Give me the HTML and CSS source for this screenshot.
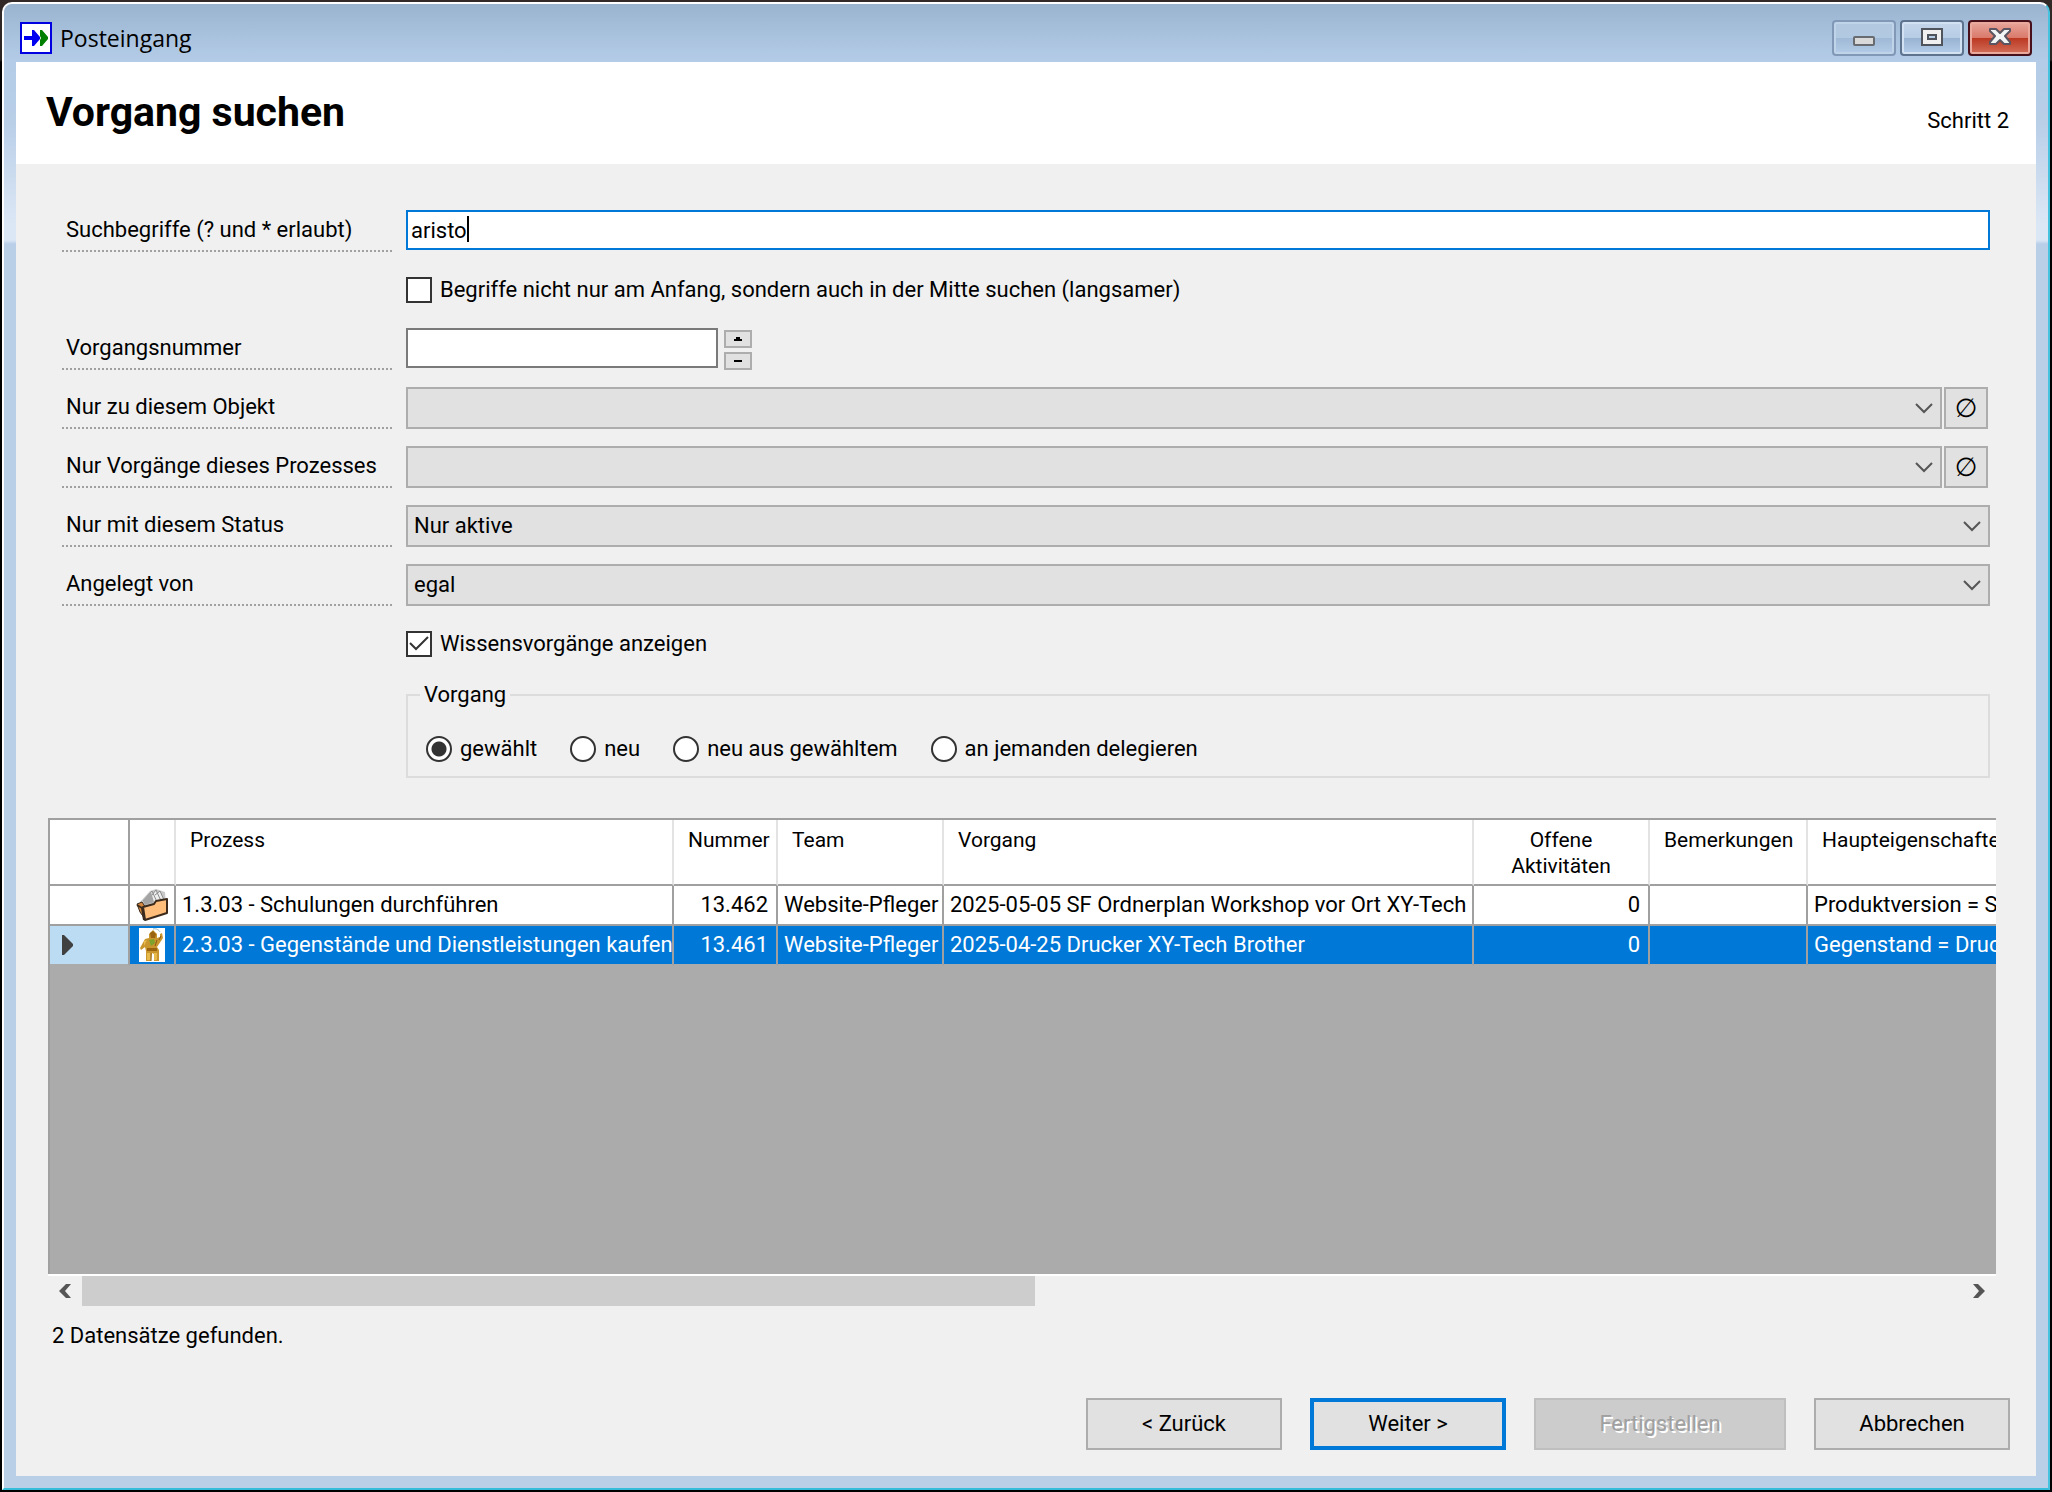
FILE: index.html
```html
<!DOCTYPE html>
<html lang="de">
<head>
<meta charset="utf-8">
<title>Posteingang</title>
<link rel="stylesheet" href="styles.css">
</head>
<body>
<div class="window">
  <header class="titlebar">
    <svg class="app-icon" viewBox="0 0 32 32" aria-hidden="true">
      <rect x="1" y="1" width="30" height="30" fill="#fff" stroke="#0000e0" stroke-width="2"/>
      <path d="M4 14h8V8h2l6 7v2l-6 7h-2v-6H4z" fill="#0000f0"/>
      <path d="M20 8h2l6 7v2l-6 7h-2v-6l1-2-1-2z" fill="#008000"/>
    </svg>
    <span class="caption">Posteingang</span>
    <button class="win-btn win-min" type="button" aria-label="Minimieren">
      <svg width="22" height="24" viewBox="0 0 22 24"><rect x="1" y="13" width="20" height="8" rx="1" fill="#d9d9d9" stroke="#686b70" stroke-width="2"/></svg>
    </button>
    <button class="win-btn" type="button" aria-label="Maximieren">
      <svg width="22" height="24" viewBox="0 0 22 24"><path fill-rule="evenodd" d="M1 5h20v16H1zM7 11v4h8v-4z" fill="#f0f0f0" stroke="#50555d" stroke-width="2"/></svg>
    </button>
    <button class="win-btn win-close" type="button" aria-label="Schließen">
      <svg width="22" height="24" viewBox="0 0 22 24"><path d="M1 5h6l4 4 4-4h6v2l-5 5 5 6v2h-6l-4-4-4 4H1v-2l5-6-5-5z" fill="#f2f4f6" stroke="#5a5560" stroke-width="2" stroke-linejoin="round"/></svg>
    </button>
  </header>

  <div class="client">
    <div class="page-head">
      <h1>Vorgang suchen</h1>
      <span class="step">Schritt 2</span>
    </div>

    <form class="search">
      <label class="field-label" for="terms">Suchbegriffe (? und * erlaubt)</label>
      <div class="control term-box">
        <input class="textbox active" id="terms" type="text" value="aristo">
        <span class="caret"></span>
      </div>

      <label class="check"><input type="checkbox"><span>Begriffe nicht nur am Anfang, sondern auch in der Mitte suchen (langsamer)</span></label>

      <label class="field-label" for="number">Vorgangsnummer</label>
      <div class="control number-box">
        <input class="textbox" id="number" type="text">
        <div class="spin">
          <button type="button" aria-label="Erhöhen"><svg width="8" height="6" viewBox="0 0 8 6"><path d="M0 3h2V1h4v2h2v2H0z"/></svg></button>
          <button type="button" aria-label="Verringern"><svg width="8" height="6" viewBox="0 0 8 6"><path d="M0 2h8v2H0z"/></svg></button>
        </div>
      </div>

      <label class="field-label" for="object">Nur zu diesem Objekt</label>
      <div class="control with-clear">
        <select class="combo" id="object"><option></option></select>
        <button class="clear" type="button" aria-label="Objekt leeren">∅</button>
      </div>

      <label class="field-label" for="process">Nur Vorgänge dieses Prozesses</label>
      <div class="control with-clear">
        <select class="combo" id="process"><option></option></select>
        <button class="clear" type="button" aria-label="Prozess leeren">∅</button>
      </div>

      <label class="field-label" for="status">Nur mit diesem Status</label>
      <div class="control"><select class="combo" id="status"><option>Nur aktive</option></select></div>

      <label class="field-label" for="creator">Angelegt von</label>
      <div class="control"><select class="combo" id="creator"><option>egal</option></select></div>

      <label class="check"><input type="checkbox" checked><span>Wissensvorgänge anzeigen</span></label>

      <fieldset>
        <legend>Vorgang</legend>
        <div class="radios">
          <label><input type="radio" name="mode" checked><span>gewählt</span></label>
          <label><input type="radio" name="mode"><span>neu</span></label>
          <label><input type="radio" name="mode"><span>neu aus gewähltem</span></label>
          <label><input type="radio" name="mode"><span>an jemanden delegieren</span></label>
        </div>
      </fieldset>
    </form>

    <div class="grid-view">
      <table>
        <colgroup>
          <col class="c-mark"><col class="c-icon"><col class="c-process"><col class="c-number"><col class="c-team"><col class="c-task"><col class="c-open"><col class="c-notes"><col class="c-props">
        </colgroup>
        <thead>
          <tr><th></th><th></th><th>Prozess</th><th>Nummer</th><th>Team</th><th>Vorgang</th><th class="center">Offene<br>Aktivitäten</th><th>Bemerkungen</th><th>Haupteigenschaften</th></tr>
        </thead>
        <tbody>
          <tr>
            <td></td>
            <td class="icon"><svg width="34" height="36" viewBox="0 0 34 36" aria-hidden="true">
              <path d="M5 15 15 4l6-2 9 3 1 12-20 4z" fill="#c9c9c9"/>
              <path d="m8 14 9-10 5 11M13 13l8-10 5 11M20 8l5-4 4 9" fill="#eee" stroke="#8c8c8c"/>
              <path d="m8 14 8-9 3 10-9 3z" fill="#a4a4a4"/>
              <path d="m2 17 5-2 4 6-1 11-5-7z" fill="#d4883f" stroke="#3b2a1c" stroke-width="1"/>
              <path d="m8 20 11-3 2-3 11-2v14L10 33z" fill="#ffbd7c" stroke="#3b2a1c" stroke-width="2" stroke-linejoin="round"/>
              <path d="m2 18 5 3 2 12" fill="none" stroke="#3b2a1c" stroke-width="2"/>
            </svg></td>
            <td>1.3.03 - Schulungen durchführen</td><td class="num">13.462</td><td>Website-Pfleger</td><td>2025-05-05 SF Ordnerplan Workshop vor Ort XY-Tech</td><td class="num">0</td><td></td><td>Produktversion = SF</td>
          </tr>
          <tr class="selected">
            <td class="marker"><svg width="12" height="20" viewBox="0 0 12 20" aria-hidden="true"><path d="M0 0h2l9 9v2l-9 9H0z" fill="#404040"/></svg></td>
            <td class="icon"><svg width="26" height="34" viewBox="0 0 26 34" aria-hidden="true">
              <path d="M0 0h26v34H0z" fill="#fff"/>
              <path d="m10 6 4-4 4 4v4l3-1V6l2-1 1 5-4 6-2 3 2 3v11h-5v-7l-2-1-1 8H7V23l-1-4-4 3-1-2 5-9 4-1z" fill="#c8962c"/>
              <path d="m11 5 3-2 3 3-1 4h-4zM8 20h10v3H8z" fill="#99630f"/>
              <path d="m10 12 5-1 1 4-4 3z" fill="#7ea32c"/>
              <path d="M8 25h4v7H8zM15 25h3v7h-3zM5 13l3-1-3 6z" fill="#e8b94b"/>
              <path d="M14 1c3-1 6 1 7 3" fill="none" stroke="#9cb9c4"/>
              <path d="M12 25v8M18 12l-2 6M22 8l-2 4" fill="none" stroke="#8c5a12"/>
            </svg></td>
            <td>2.3.03 - Gegenstände und Dienstleistungen kaufen</td><td class="num">13.461</td><td>Website-Pfleger</td><td>2025-04-25 Drucker XY-Tech Brother</td><td class="num">0</td><td></td><td>Gegenstand = Drucker</td>
          </tr>
        </tbody>
      </table>
    </div>
    <div class="scrollbar">
      <button type="button" aria-label="Nach links"><svg width="12" height="14" viewBox="0 0 12 14"><path d="M7 0h5L6 7l6 7H7L0 7z" fill="#555"/></svg></button>
      <div class="track"><div class="thumb" style="width: 50.7%"></div></div>
      <button type="button" aria-label="Nach rechts"><svg width="12" height="14" viewBox="0 0 12 14"><path d="M0 0h5l7 7-7 7H0l6-7z" fill="#555"/></svg></button>
    </div>
    <p class="result">2 Datensätze gefunden.</p>

    <footer class="actions">
      <button class="btn" type="button">&lt; Zurück</button>
      <button class="btn default" type="button">Weiter &gt;</button>
      <button class="btn wide" type="button" disabled>Fertigstellen</button>
      <button class="btn" type="button">Abbrechen</button>
    </footer>
  </div>
</div>
</body>
</html>
```
FILE: styles.css
```css
* { box-sizing: border-box; }

body {
  margin: 0;
  min-height: 100vh;
  padding: 2px;
  display: flex;
  background: linear-gradient(#332a28 0, #2a2422 60px, #000 62px);
  font: 22px/26px Roboto, "Liberation Sans", Arial, sans-serif;
  color: #000;
}

button, input, select { font: inherit; color: inherit; margin: 0; }
button { padding: 0; }
svg { display: block; }

/* Window frame */
.window {
  flex: 1;
  min-width: 0;
  display: flex;
  flex-direction: column;
  border: 2px solid #fff;
  border-right-color: #45c3de;
  border-bottom-color: #35bcd8;
  border-radius: 10px 10px 0 0;
  background: linear-gradient(#9ab4d0 0, #b4cce7 58px, #b9cfe8 120px, #dce7f5 220px, #dce7f5 236px, #b9cfe8 240px);
}

.titlebar {
  display: flex;
  align-items: center;
  gap: 4px;
  height: 58px;
  padding: 12px 16px 2px;
}
.app-icon { width: 32px; height: 32px; }
.caption {
  flex: 1;
  padding-left: 4px;
  font: 23px/32px "Open Sans", "Noto Sans", sans-serif;
}
.win-btn {
  width: 64px;
  height: 36px;
  display: grid;
  place-items: start center;
  padding-top: 2px;
  border: 2px solid #5d7390;
  border-radius: 4px;
  background: linear-gradient(#c3d5e9 0, #b7cde6 50%, #98b3d2 50%, #b5cdea 100%);
  box-shadow: inset 0 0 0 2px #d3e2f2;
}
.win-min {
  border-color: #8199b6;
  background: linear-gradient(#b2c8e0 0, #b2c9e2 50%, #9fb9d6 50%, #b4cce7 100%);
  box-shadow: inset 0 0 0 2px #bfd3e9;
}
.win-close {
  border-color: #47101a;
  background: linear-gradient(#e8a79c 0, #d9796a 50%, #bb3822 50%, #d4705a 100%);
  box-shadow: inset 0 0 0 2px #eaa99c;
}

.client {
  flex: 1;
  display: flex;
  flex-direction: column;
  margin: 0 12px 12px;
  background: #f0f0f0;
}

.page-head {
  display: flex;
  align-items: flex-end;
  justify-content: space-between;
  padding: 28px 27px 30px 30px;
  background: #fff;
}
h1 { margin: 0; font-size: 41px; line-height: 44px; }

/* Search form */
.search {
  display: grid;
  grid-template-columns: 330px minmax(0, 1fr);
  grid-auto-rows: minmax(42px, auto);
  gap: 17px 14px;
  padding: 46px 46px 40px;
}
.field-label {
  height: 42px;
  padding-left: 4px;
  line-height: 40px;
  border-bottom: 2px dotted #a0a0a0;
  white-space: nowrap;
}
.control { display: flex; }
.textbox {
  flex: 1;
  min-width: 0;
  height: 40px;
  padding: 0 4px;
  border: 2px solid #7a7a7a;
  border-radius: 0;
  background: #fff;
}
.textbox.active { border-color: #0078d7; padding-left: 3px; }
.term-box { position: relative; }
.caret {
  position: absolute;
  left: 61px;
  top: 6px;
  width: 2px;
  height: 26px;
  background: #000;
}
.number-box .textbox { flex: none; width: 312px; }
.spin {
  display: grid;
  gap: 4px;
  margin-left: 6px;
  align-content: end;
}
.spin button {
  width: 28px;
  height: 18px;
  display: grid;
  place-items: center;
  border: 2px solid #adadad;
  background: #e1e1e1;
}
.combo {
  appearance: none;
  flex: 1;
  min-width: 0;
  height: 42px;
  padding: 0 40px 0 6px;
  border: 2px solid #adadad;
  border-radius: 0;
  background: #e1e1e1 url("data:image/svg+xml,%3Csvg xmlns='http://www.w3.org/2000/svg' width='18' height='12'%3E%3Cpath d='M1 2l8 8 8-8' fill='none' stroke='%23555' stroke-width='2'/%3E%3C/svg%3E") no-repeat right 7px center;
}
.with-clear { gap: 2px; padding-right: 2px; }
.clear {
  width: 44px;
  height: 42px;
  align-self: end;
  border: 2px solid #adadad;
  background: #e1e1e1;
  font: 26px/34px "DejaVu Sans", sans-serif;
}

.check {
  grid-column: 2;
  display: flex;
  align-items: center;
  gap: 8px;
  justify-self: start;
}
.check input {
  appearance: none;
  width: 26px;
  height: 26px;
  border: 2px solid #333;
  background: #fff;
}
.check input:checked {
  background: #fff url("data:image/svg+xml,%3Csvg xmlns='http://www.w3.org/2000/svg' width='22' height='22'%3E%3Cpath d='M2 10l6 6L20 4' fill='none' stroke='%23333' stroke-width='2'/%3E%3C/svg%3E") no-repeat;
}

fieldset {
  grid-column: 2;
  min-width: 0;
  height: 96px;
  margin: 0;
  padding: 0 18px;
  border: 2px solid #dcdcdc;
}
legend { margin-left: -6px; padding: 0 4px; }
.radios { display: flex; flex-wrap: wrap; gap: 33px; padding-top: 28px; }
.radios label { display: flex; align-items: center; gap: 8px; }
.radios input {
  appearance: none;
  width: 26px;
  height: 26px;
  border: 2px solid #333;
  border-radius: 50%;
  background: #fff;
}
.radios input:checked { background: radial-gradient(circle, #333 0 7px, #fff 8px); }

/* Result table */
.grid-view {
  flex: 1;
  margin: 0 40px 0 32px;
  overflow: hidden;
  border: solid #a0a0a0;
  border-width: 2px 0 0 2px;
  background: #ababab;
}
table {
  width: 2200px;
  table-layout: fixed;
  border-collapse: separate;
  border-spacing: 0;
}
.c-mark { width: 80px; }
.c-icon { width: 46px; }
.c-process { width: 498px; }
.c-number { width: 104px; }
.c-team { width: 166px; }
.c-task { width: 530px; }
.c-open { width: 176px; }
.c-notes { width: 158px; }
th {
  height: 66px;
  padding: 7px 8px 5px 14px;
  vertical-align: top;
  text-align: left;
  font-size: 21px;
  font-weight: normal;
  white-space: nowrap;
  background: #fff;
  border-right: 2px solid #e3e3e3;
  border-bottom: 2px solid #a0a0a0;
}
th:first-child { border-right-color: #a0a0a0; }
th.center { padding: 7px 6px 5px; text-align: center; }
td {
  height: 40px;
  padding: 0 6px;
  line-height: 36px;
  white-space: nowrap;
  background: #fff;
  border-right: 2px solid #a0a0a0;
  border-bottom: 2px solid #a0a0a0;
}
.num { text-align: right; padding-right: 8px; }
td.icon { padding: 0 5px; }
.selected td { background: #0078d7; color: #fff; border-bottom-color: #ababab; }
.selected td.icon { padding: 0 9px; }
.selected td.marker { padding: 0 12px; background: #bcdcf4; }

.scrollbar {
  display: flex;
  height: 32px;
  margin: 0 40px 0 32px;
  border-top: 2px solid #fff;
}
.scrollbar button {
  width: 34px;
  display: grid;
  place-items: center;
  border: 0;
  background: none;
}
.track { flex: 1; display: flex; }
.thumb { background: #cdcdcd; }

.result { margin: 17px 36px 49px; }

.actions {
  display: flex;
  justify-content: flex-end;
  gap: 28px;
  padding: 0 26px 26px;
}
.btn {
  width: 196px;
  height: 52px;
  border: 2px solid #adadad;
  background: #e1e1e1;
}
.btn.wide { width: 252px; }
.btn.default { border: 4px solid #0078d7; }
.btn:disabled {
  border-color: #bfbfbf;
  background: #ccc;
  color: #a0a0a0;
  text-shadow: 2px 2px #fff;
}
```
